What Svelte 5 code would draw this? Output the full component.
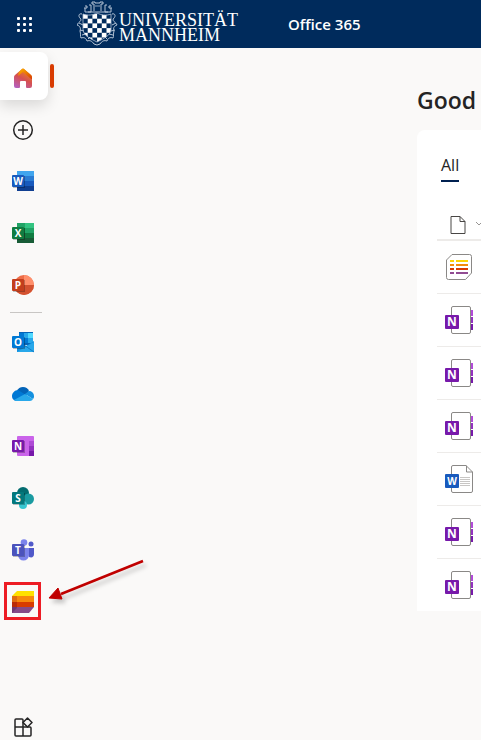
<script lang="ts">
	const apps = ['Word', 'Excel', 'PowerPoint'];
	const services = ['Outlook', 'OneDrive', 'OneNote', 'SharePoint', 'Teams', 'Lists'];
	const files = ['list', 'notebook', 'notebook', 'notebook', 'document', 'notebook', 'notebook'];

	// light to dark bands, badge colour
	const bands = {
		Word: ['#41a5ee', '#2b7cd3', '#185abd', '#103f91', '#185abd'],
		Excel: ['#33c481', '#21a366', '#107c41', '#185c37', '#107c41']
	};
	const shield = [0, 1, 2, 3, 4, 5];
</script>

{#snippet badge(letter, color)}
	<rect x="1" y="6" width="12" height="12" fill="#000" opacity=".25" />
	<rect y="5" width="12" height="12" rx="1" fill={color} />
	<text class="letter" x="6" y="15" text-anchor="middle">{letter}</text>
{/snippet}

{#snippet appIcon(name)}
	<svg width="22" height="22" viewBox="0 0 22 22" aria-hidden="true">
		{#if name === 'Word'}
			{#each bands.Word.slice(0, 4) as fill, i}
				<rect x="5" y={1 + i * 5} width="17" height="5" {fill} />
			{/each}
			{@render badge('W', bands.Word[4])}
		{:else if name === 'Excel'}
			{#each bands.Excel.slice(0, 4) as fill, i}
				<rect x="5" y={1 + i * 5} width="17" height="5" {fill} />
			{/each}
			<path d="M5 1h8v5H5z" fill="#21a366" />
			<path d="M5 6h8v5H5zM13 11h9v5h-9z" fill="#107c41" />
			<path d="M5 11h8v5H5z" fill="#185c37" />
			{@render badge('X', bands.Excel[4])}
		{:else if name === 'PowerPoint'}
			<circle cx="12" cy="11" r="10" fill="#ed6c47" />
			<path d="M12 1a10 10 0 0 1 10 10H12z" fill="#ff8f6b" />
			<path d="M2 11h20a10 10 0 0 1-20 0z" fill="#d35230" />
			{@render badge('P', '#c43e1c')}
		{:else if name === 'Outlook'}
			<path d="M7 1h14v13H7z" fill="#0364b8" />
			<path d="M7 2h5v5H7z" fill="#0078d4" />
			<path d="M12 2h4v5h-4zM7 7h5v5H7z" fill="#28a8ea" />
			<path d="M16 2h5v5h-5z" fill="#50d9ff" />
			<path d="M12 7h4v5h-4z" fill="#0078d4" />
			<path d="M16 7h5v5h-5z" fill="#28a8ea" />
			<path d="M12 14l2 1 8-5v11H5v-5z" fill="#1490df" />
			<path d="M5 21l17-10v10z" fill="#28a8ea" />
			<path d="M12 14l10 7" stroke="#0a66b5" stroke-width=".7" />
			{@render badge('O', '#0078d4')}
		{:else if name === 'OneDrive'}
			<path d="M5 8a6.500 6.500 0 0 1 12 0l-3 5z" fill="#0364b8" />
			<path d="M13 11l4-3a5 5 0 0 1 5 5c0 1 0 2-1 3z" fill="#1490df" />
			<path d="M6 7l8 5-10 6a5 5 0 0 1-4-5c0-3 3-6 6-6z" fill="#0078d4" />
			<path d="M2 17l11-6 8 5c-1 2-3 2-4 2H5c-1 0-2 0-3-1z" fill="#28a8ea" />
		{:else if name === 'OneNote'}
			<rect x="5" y="1" width="17" height="20" rx="1" fill="#ca64ea" />
			<path d="M17 6h5v5h-5z" fill="#ae4bd5" />
			<path d="M17 11h5v5h-5z" fill="#9332bf" />
			<path d="M17 16h5v5h-5z" fill="#7719aa" />
			{@render badge('N', '#7719aa')}
		{:else if name === 'SharePoint'}
			<circle cx="11" cy="6" r="6" fill="#036c70" />
			<circle cx="16.500" cy="12" r="5.500" fill="#1a9ba1" />
			<circle cx="11" cy="18" r="4" fill="#37c6d0" />
			{@render badge('S', '#03787c')}
		{:else if name === 'Teams'}
			<circle cx="19" cy="5" r="2.500" fill="#5059c9" />
			<path d="M15 9h7v6c0 3-2 4-5 3z" fill="#5059c9" />
			<circle cx="12" cy="3.500" r="3.300" fill="#7b83eb" />
			<path d="M6 9h11v7a5 5 0 0 1-11 0z" fill="#7b83eb" />
			{@render badge('T', '#4b53bc')}
		{:else}
			<path d="M5 0h17v5H0z" fill="#ffe100" />
			<path d="M0 5h22v6H0z" fill="#f7890c" />
			<path d="M0 11h22v5H0z" fill="#d83b01" />
			<path d="M0 16h22l-5 6H0z" fill="#854a88" />
			<path d="M0 5h5v6H0z" fill="#e06b10" />
			<path d="M0 11h5v5H0z" fill="#b92b08" />
			<path d="M0 16h5v1l-5 5z" fill="#6d3874" />
		{/if}
	</svg>
{/snippet}

<div class="page">
	<header>
		<button class="waffle" aria-label="App launcher">
			{#each Array(9) as _}
				<span></span>
			{/each}
		</button>
		<a class="brand" href="#home" aria-label="Universität Mannheim">
			<svg width="42" height="46" viewBox="0 0 42 46" fill="none" stroke="#b4c3d5" aria-hidden="true">
				<defs>
					<clipPath id="shield">
						<path d="M6 13c5 2 10 1 14-1 4 2 9 3 14 1v15c0 6-6 9-14 13C12 37 6 34 6 28z" />
					</clipPath>
				</defs>
				<path d="M8 11V7h2V5H8M8 7H7M14 11V4h-2M14 11h-3M17 10V3h-2V1h3v1h5V1h3v2h-2v7M28 11V4h2M28 11h3M34 11V7h-2V5h2M34 7h1M8 11h26" />
				<path d="M18 5h5" stroke-width=".8" />
				<path d="M5 13c-3-1-4 2-2 4 3 3-2 4-3 7 3 1 4 3 3 6 1 3 0 5 1 7 3-1 5 0 6 3 3-1 5 0 7 3l3 1 3-1c2-3 4-4 7-3 1-3 3-4 6-3 1-2 0-4 1-7-1-3 0-5 3-6-1-3-6-4-3-7 2-2 1-5-2-4" />
				<path d="M2 22l4 2M3 29l4 1M5 34l4-1M11 38l2-2M39 22l-4 2M38 29l-4 1M36 34l-4-1M30 38l-2-2" />
				<g stroke="none" fill="#fff" clip-path="url(#shield)">
					{#each shield as row}
						{#each shield as col}
							{#if (row + col) % 2 === 0}
								<rect x={6 + col * 4.7} y={13 + row * 4.7} width="4.700" height="4.700" />
							{/if}
						{/each}
					{/each}
				</g>
				<path d="M6 13c5 2 10 1 14-1 4 2 9 3 14 1v15c0 6-6 9-14 13C12 37 6 34 6 28z" stroke-width=".8" />
			</svg>
			<span>UNIVERSITÄT<br />MANNHEIM</span>
		</a>
		<a class="suite" href="#office">Office 365</a>
	</header>

	<div class="body">
		<nav aria-label="Apps">
			<button class="home" aria-label="Home">
				<svg width="18" height="20" viewBox="0 0 18 20" aria-hidden="true">
					<defs>
						<linearGradient id="wall" x1="0.7" y1="0" x2="0.2" y2="1">
							<stop offset="0" stop-color="#ee8a19" />
							<stop offset=".5" stop-color="#d6504f" />
							<stop offset="1" stop-color="#b660bd" />
						</linearGradient>
						<linearGradient id="roof" x1="0" y1="0" x2="1" y2="1">
							<stop offset="0" stop-color="#ffb900" />
							<stop offset="1" stop-color="#d83b01" />
						</linearGradient>
					</defs>
					<path d="M8 1q1-1 2 0l7 6q1 1 1 2v9q0 2-2 2h-3q-1 0-1-1v-5q0-1-1-1H7q-1 0-1 1v5q0 1-1 1H2q-2 0-2-2V9q0-1 1-2z" fill="url(#wall)" />
					<path d="M5 4l3-3q1-1 2 0l7 6q1 1 1 3v1q-1 0-2-1L9 4 4 8z" fill="url(#roof)" />
				</svg>
			</button>
			<button class="create" aria-label="Create">
				<svg width="22" height="22" viewBox="0 0 22 22" fill="none" stroke="#242424" stroke-width="1.5" aria-hidden="true">
					<circle cx="11" cy="11" r="9.300" />
					<path d="M11 6v10M6 11h10" />
				</svg>
			</button>
			{#each apps as name}
				<button class="app" aria-label={name}>{@render appIcon(name)}</button>
			{/each}
			<hr />
			{#each services as name}
				<button class="app" aria-label={name}>
					{@render appIcon(name)}
					{#if name === 'Lists'}
						<span class="marker"></span>
						<svg class="arrow" width="110" height="56" viewBox="0 0 110 56" aria-hidden="true">
							<path d="M98 7L16 40" stroke="#c00000" stroke-width="2.600" />
							<path d="M4 44l9-10 4 11z" fill="#c00000" stroke="#c00000" />
						</svg>
					{/if}
				</button>
			{/each}
			<button class="more" aria-label="All apps">
				<svg width="20" height="20" viewBox="0 0 20 20" fill="none" stroke="#242424" stroke-width="1.500" stroke-linejoin="round" aria-hidden="true">
					<path d="M10 10V3q0-1-1-1H3Q2 2 2 3v15q0 1 1 1h14q1 0 1-1v-7q0-1-1-1H2M10 10v9" />
					<path d="M14.500 1L19 5.500 14.500 10 10 5.500z" fill="#faf9f8" />
				</svg>
			</button>
		</nav>

		<main>
			<h1>Good</h1>
			<section class="card">
				<button class="tab">All</button>
				<table aria-label="Recent files">
					<thead>
						<tr>
							<th>
								<button class="sort" aria-label="Sort by type">
									<svg width="32" height="20" viewBox="0 0 32 20" fill="none" stroke="#484644" aria-hidden="true">
										<path d="M1 1.500h9l5 5v12H1z" />
										<path d="M10 1.500v5h5" />
										<path d="M26 7l3 3 3-3" stroke="#979593" />
									</svg>
								</button>
							</th>
						</tr>
					</thead>
					<tbody>
						{#each files as kind}
							<tr>
								<td>
									<svg width="29" height="28" viewBox="0 0 29 28" aria-hidden="true">
										{#if kind === 'list'}
											<path d="M7 1.500h17.500q2 0 2 2V20l-6 6.500H3.500q-2 0-2-2V7z" fill="#fff" stroke="#8a8886" />
											<g stroke-width="2">
												<path d="M5 8h4M11 8h12" stroke="#fbd305" />
												<path d="M5 12h4M11 12h12" stroke="#f28a0b" />
												<path d="M5 16h4M11 16h12" stroke="#d83b01" />
												<path d="M5 20h4M11 20h12" stroke="#914b92" />
											</g>
										{:else if kind === 'notebook'}
											<rect x="6.500" y=".5" width="19" height="27" rx="1.500" fill="#fff" stroke="#8a8886" />
											<path d="M26 4h2v6h-2z" fill="#b14ad8" />
											<path d="M26 11h2v6h-2z" fill="#9332bf" />
											<path d="M26 18h2v6h-2z" fill="#7719aa" />
											<rect y="9" width="14" height="14" rx="1" fill="#7719aa" />
											<text class="letter large" x="7" y="20" text-anchor="middle">N</text>
										{:else}
											<path d="M8 .5h13l6.500 6.500v19q0 1.500-1.500 1.500H8q-1.500 0-1.500-1.500V2Q6.500.5 8 .5z" fill="#fff" stroke="#8a8886" />
											<path d="M21.500.5V7h6" fill="none" stroke="#8a8886" />
											<path d="M15 12.500h10M15 14.500h10M15 16.500h10M15 18.500h10M15 20.500h10" stroke="#c8c6c4" />
											<rect y="9" width="14" height="14" rx="1" fill="#185abd" />
											<text class="letter" x="7" y="20" text-anchor="middle">W</text>
										{/if}
									</svg>
								</td>
							</tr>
						{/each}
					</tbody>
				</table>
			</section>
		</main>
	</div>
</div>

<style>
	:global(body) {
		background: #faf9f8;
		font-family: 'Open Sans', 'Noto Sans', sans-serif;
		color: #242424;
	}

	.page {
		display: flex;
		flex-direction: column;
		min-height: 100vh;
	}

	button {
		border: 0;
		padding: 0;
		background: none;
		font: inherit;
		color: inherit;
		cursor: pointer;
	}

	svg {
		display: block;
	}

	header {
		display: flex;
		align-items: center;
		height: 48px;
		background: #002b5c;
		color: #fff;
	}

	header a {
		color: #fff;
		text-decoration: none;
	}

	.waffle {
		display: grid;
		grid-template-columns: repeat(3, 3px);
		gap: 3px;
		place-content: center;
		width: 48px;
		height: 48px;
	}

	.waffle span {
		width: 3px;
		height: 3px;
		border-radius: 1px;
		background: #fff;
	}

	.brand {
		display: flex;
		align-items: center;
		margin-left: 29px;
		font: 18px/15px 'Liberation Serif', serif;
		white-space: nowrap;
	}

	.brand span {
		padding-top: 7px;
	}

	.suite {
		margin-left: 50px;
		font-size: 15px;
		font-weight: 600;
		white-space: nowrap;
	}

	.body {
		display: flex;
		flex: 1;
	}

	nav {
		display: flex;
		flex-direction: column;
		flex: none;
		width: 48px;
		padding-top: 4px;
	}

	nav button {
		position: relative;
		display: grid;
		place-items: center;
		width: 46px;
		height: 52px;
	}

	nav .home {
		width: 48px;
		height: 48px;
		padding-top: 4px;
		padding-right: 2px;
		margin-bottom: 4px;
		border-radius: 0 8px 8px 0;
		background: #fff;
		box-shadow: 0 6px 14px rgba(0, 0, 0, 0.13);
	}

	.home::after {
		content: '';
		position: absolute;
		left: 50px;
		top: 12px;
		width: 4px;
		height: 24px;
		border-radius: 2px;
		background: #d83b01;
	}

	nav .create {
		height: 51px;
	}

	nav .more {
		height: 26px;
		margin-top: auto;
	}

	hr {
		width: 32px;
		margin: 1px 0 3px 10px;
		border: 0;
		border-top: 1px solid #c8c6c4;
	}

	.marker {
		position: absolute;
		left: 4px;
		top: 6px;
		width: 31px;
		height: 32px;
		border: 3px solid #ed1c24;
	}

	.arrow {
		position: absolute;
		left: 45px;
		top: -22px;
		filter: drop-shadow(3px 4px 2px rgba(0, 0, 0, 0.2));
		pointer-events: none;
	}

	.letter {
		font: bold 10px 'Open Sans', sans-serif;
		fill: #fff;
	}

	.large {
		font-size: 12px;
	}

	main {
		flex: 1;
		min-width: 0;
		padding-left: 369px;
	}

	h1 {
		margin: 36px 0 14px;
		font-size: 23px;
		font-weight: 600;
		line-height: 32px;
	}

	.card {
		padding: 20px 0 0 20px;
		border-radius: 8px 0 0 0;
		background: #fff;
	}

	.tab {
		display: block;
		height: 32px;
		margin: 0 0 28px 4px;
		border-bottom: 2px solid #002050;
		font-size: 16px;
	}

	table {
		width: 100%;
		border-collapse: collapse;
	}

	th {
		height: 29px;
		padding: 0 0 0 13px;
		border-bottom: 2px solid #edebe9;
	}

	.sort {
		display: block;
	}

	td {
		height: 52px;
		padding: 0 0 0 8px;
		border-bottom: 1px solid #edebe9;
	}

	tr:last-child td {
		border-bottom: 0;
	}
</style>
